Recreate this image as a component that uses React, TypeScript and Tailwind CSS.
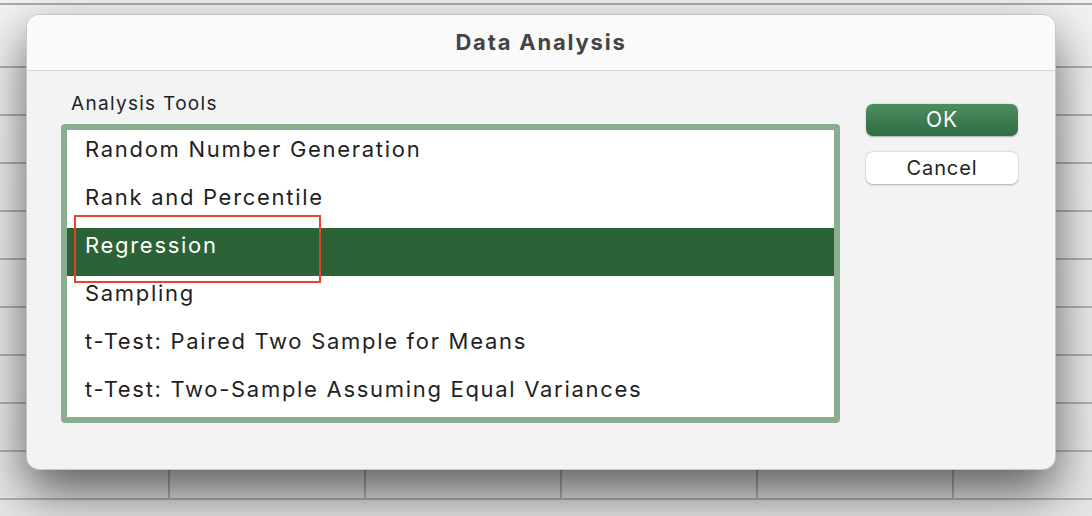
import React from "react";

const items = [
  "Random Number Generation",
  "Rank and Percentile",
  "Regression",
  "Sampling",
  "t-Test: Paired Two Sample for Means",
  "t-Test: Two-Sample Assuming Equal Variances",
];

function SheetRow() {
  return (
    <div className="flex shrink-0 h-[48px] border-b-2 border-[#b2b2b2]">
      <div className="w-[170px] shrink-0 border-r-2 border-[#b2b2b2]" />
      <div className="w-[196px] shrink-0 border-r-2 border-[#b2b2b2]" />
      <div className="w-[196px] shrink-0 border-r-2 border-[#b2b2b2]" />
      <div className="w-[196px] shrink-0 border-r-2 border-[#b2b2b2]" />
      <div className="w-[196px] shrink-0 border-r-2 border-[#b2b2b2]" />
      <div className="w-[196px] shrink-0" />
    </div>
  );
}

export default function App() {
  return (
    <div
      className="relative w-[1092px] h-[516px] overflow-hidden bg-gradient-to-b from-[#f2f2f2] to-[#e6e6e6]"
      style={{ fontFamily: "Inter, 'Noto Sans', sans-serif" }}
    >
      {/* spreadsheet background */}
      <div className="flex flex-col">
        <div className="h-[3px] shrink-0" />
        <div className="h-[2px] shrink-0 bg-[#a9a9a9]" />
        <div className="h-[63px] shrink-0 border-b-2 border-[#b2b2b2]" />
        <SheetRow />
        <SheetRow />
        <SheetRow />
        <SheetRow />
        <SheetRow />
        <SheetRow />
        <SheetRow />
        <SheetRow />
        <SheetRow />
      </div>

      {/* dialog */}
      <div className="absolute left-[26px] top-[14px] w-[1030px] h-[456px] rounded-[13px] border border-[#c6c6c6] bg-[#f3f3f3] shadow-[0_22px_50px_rgba(0,0,0,0.6)] overflow-hidden flex flex-col">
        <div className="h-[56px] shrink-0 bg-[#fafafa] border-b border-[#d6d6d6] flex items-center justify-center">
          <span className="text-[22px] font-bold text-[#444444] tracking-[1.8px]">Data Analysis</span>
        </div>
        <div className="flex flex-1">
          <div className="pl-[34px] pt-[21px] flex flex-col">
            <div className="pl-[10px] text-[19px] leading-[24px] text-[#222222] tracking-[1.3px]">
              Analysis Tools
            </div>
            <div className="mt-[8px] w-[779px] h-[299px] rounded-[4px] border-[6px] border-[#8aac8f] bg-white overflow-hidden">
              <div className="pt-[2px] flex flex-col">
                {items.map((t) => {
                  const sel = t === "Regression";
                  return (
                    <div
                      key={t}
                      className={`h-[48px] shrink-0 pl-[18px] text-[22px] leading-[34px] tracking-[1.7px] whitespace-nowrap ${
                        sel ? "bg-[#2b6236] text-white" : "text-[#1f1f1f]"
                      }`}
                    >
                      {t}
                    </div>
                  );
                })}
              </div>
            </div>
          </div>
          <div className="ml-[26px] pt-[33px] flex flex-col gap-[16px]">
            <button className="w-[152px] h-[32px] rounded-[7px] bg-gradient-to-b from-[#4d8e60] to-[#2e6c42] text-white text-[21px] leading-[32px] tracking-[1px] shadow-[0_0.5px_1.5px_rgba(0,0,0,0.3)]">
              OK
            </button>
            <button className="w-[152px] h-[32px] rounded-[7px] bg-white text-[#222222] text-[20px] leading-[32px] tracking-[0.9px] shadow-[0_0.5px_2px_rgba(0,0,0,0.3)]">
              Cancel
            </button>
          </div>
        </div>
      </div>

      {/* red annotation box */}
      <div className="absolute left-[74px] top-[215px] w-[247px] h-[68px] border-2 border-[#e8432d]" />
    </div>
  );
}
